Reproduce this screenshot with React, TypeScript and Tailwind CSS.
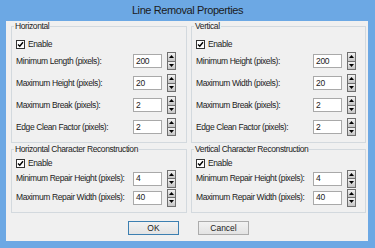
import React from 'react';

const font = { fontFamily: '"Liberation Sans", Arial, sans-serif' };

interface Field {
  label: string;
  value: string;
}

const Spinner: React.FC = () => (
  <div className="flex flex-col w-[9px] h-[18px]">
    <div className="flex-1 flex items-center justify-center border border-[#6f6f6f] bg-gradient-to-b from-[#f2f2f2] to-[#c4c4c4]">
      <svg width="5" height="3" viewBox="0 0 5 3"><path d="M2.5 0 L5 3 L0 3 Z" fill="#000" /></svg>
    </div>
    <div className="flex-1 flex items-center justify-center border border-t-0 border-[#6f6f6f] bg-gradient-to-b from-[#f2f2f2] to-[#c4c4c4]">
      <svg width="5" height="3" viewBox="0 0 5 3"><path d="M0 0 L5 0 L2.5 3 Z" fill="#000" /></svg>
    </div>
  </div>
);

const CheckRow: React.FC<{ className: string }> = ({ className }) => (
  <div className={`flex items-center gap-[3px] ${className}`}>
    <div className="w-[9px] h-[9px] border border-[#333] bg-white flex items-center justify-center">
      <svg width="7" height="7" viewBox="0 0 7 7">
        <path d="M1 3.5 L2.8 5.3 L6 1.3" stroke="#000" strokeWidth="1.4" fill="none" />
      </svg>
    </div>
    <span className="text-[8.5px] tracking-[-0.4px] leading-none text-[#222]">Enable</span>
  </div>
);

const FieldRow: React.FC<{ field: Field; h: string }> = ({ field, h }) => (
  <div className={`flex items-center ${h}`}>
    <span className="w-[117px] whitespace-nowrap text-[8.5px] tracking-[-0.4px] leading-none text-[#222]">{field.label}</span>
    <div className="w-[29px] h-[14px] border border-[#a9a9a9] bg-white flex items-center pl-[2px] text-[8.5px] tracking-[-0.3px] leading-none text-[#222]">
      {field.value}
    </div>
    <div className="ml-[5px]">
      <Spinner />
    </div>
  </div>
);

const Group: React.FC<{ title: string; children: React.ReactNode; className?: string }> = ({ title, children, className }) => (
  <fieldset className={`border border-[#d3d9de] px-[4px] ${className ?? ''}`}>
    <legend className="-ml-[2px] px-[1px] whitespace-nowrap text-[8.5px] tracking-[-0.4px] leading-[10px] text-[#222]">{title}</legend>
    {children}
  </fieldset>
);

const horizontal: Field[] = [
  { label: 'Minimum Length (pixels):', value: '200' },
  { label: 'Maximum Height (pixels):', value: '20' },
  { label: 'Maximum Break (pixels):', value: '2' },
  { label: 'Edge Clean Factor (pixels):', value: '2' },
];

const vertical: Field[] = [
  { label: 'Minimum Height (pixels):', value: '200' },
  { label: 'Maximum Width (pixels):', value: '20' },
  { label: 'Maximum Break (pixels):', value: '2' },
  { label: 'Edge Clean Factor (pixels):', value: '2' },
];

const repair: Field[] = [
  { label: 'Minimum Repair Height (pixels):', value: '4' },
  { label: 'Maximum Repair Width (pixels):', value: '40' },
];

export default function App() {
  return (
    <div className="w-[375px] h-[248px] bg-[#6ca8e4] flex flex-col" style={font}>
      <div className="h-[21px] flex items-center justify-center text-[11px] tracking-[-0.4px] text-[#1b1b1b]">
        Line Removal Properties
      </div>
      <div className="ml-[6px] mr-[7px] mb-[7px] flex-1 bg-[#f0f0f0] flex flex-col pl-[5px] pr-[2px]">
        <div className="grid grid-cols-[176px_175px] gap-x-[4px]">
          <Group title="Horizontal" className="pb-[4px]">
            <CheckRow className="mt-[7px] h-[12px]" />
            {horizontal.map((f) => (
              <FieldRow key={f.label} field={f} h="h-[22px]" />
            ))}
          </Group>
          <Group title="Vertical" className="pb-[4px]">
            <CheckRow className="mt-[7px] h-[12px]" />
            {vertical.map((f) => (
              <FieldRow key={f.label} field={f} h="h-[22px]" />
            ))}
          </Group>
          <Group title="Horizontal Character Reconstruction" className="pb-[5px] mt-[1px]">
            <CheckRow className="mt-[4px] h-[11px]" />
            {repair.map((f) => (
              <FieldRow key={f.label} field={f} h="h-[19px]" />
            ))}
          </Group>
          <Group title="Vertical Character Reconstruction" className="pb-[5px] mt-[1px]">
            <CheckRow className="mt-[4px] h-[11px]" />
            {repair.map((f) => (
              <FieldRow key={f.label} field={f} h="h-[19px]" />
            ))}
          </Group>
        </div>
        <div className="mt-[8px] flex justify-center gap-[19px]">
          <button className="w-[51px] h-[14px] border border-[#3c7fb1] bg-gradient-to-b from-[#f2f2f2] to-[#e3e3e3] text-[8.5px] leading-none text-[#222]">
            OK
          </button>
          <button className="w-[51px] h-[14px] border border-[#acacac] bg-gradient-to-b from-[#f2f2f2] to-[#e3e3e3] text-[8.5px] leading-none text-[#222]">
            Cancel
          </button>
        </div>
      </div>
    </div>
  );
}
